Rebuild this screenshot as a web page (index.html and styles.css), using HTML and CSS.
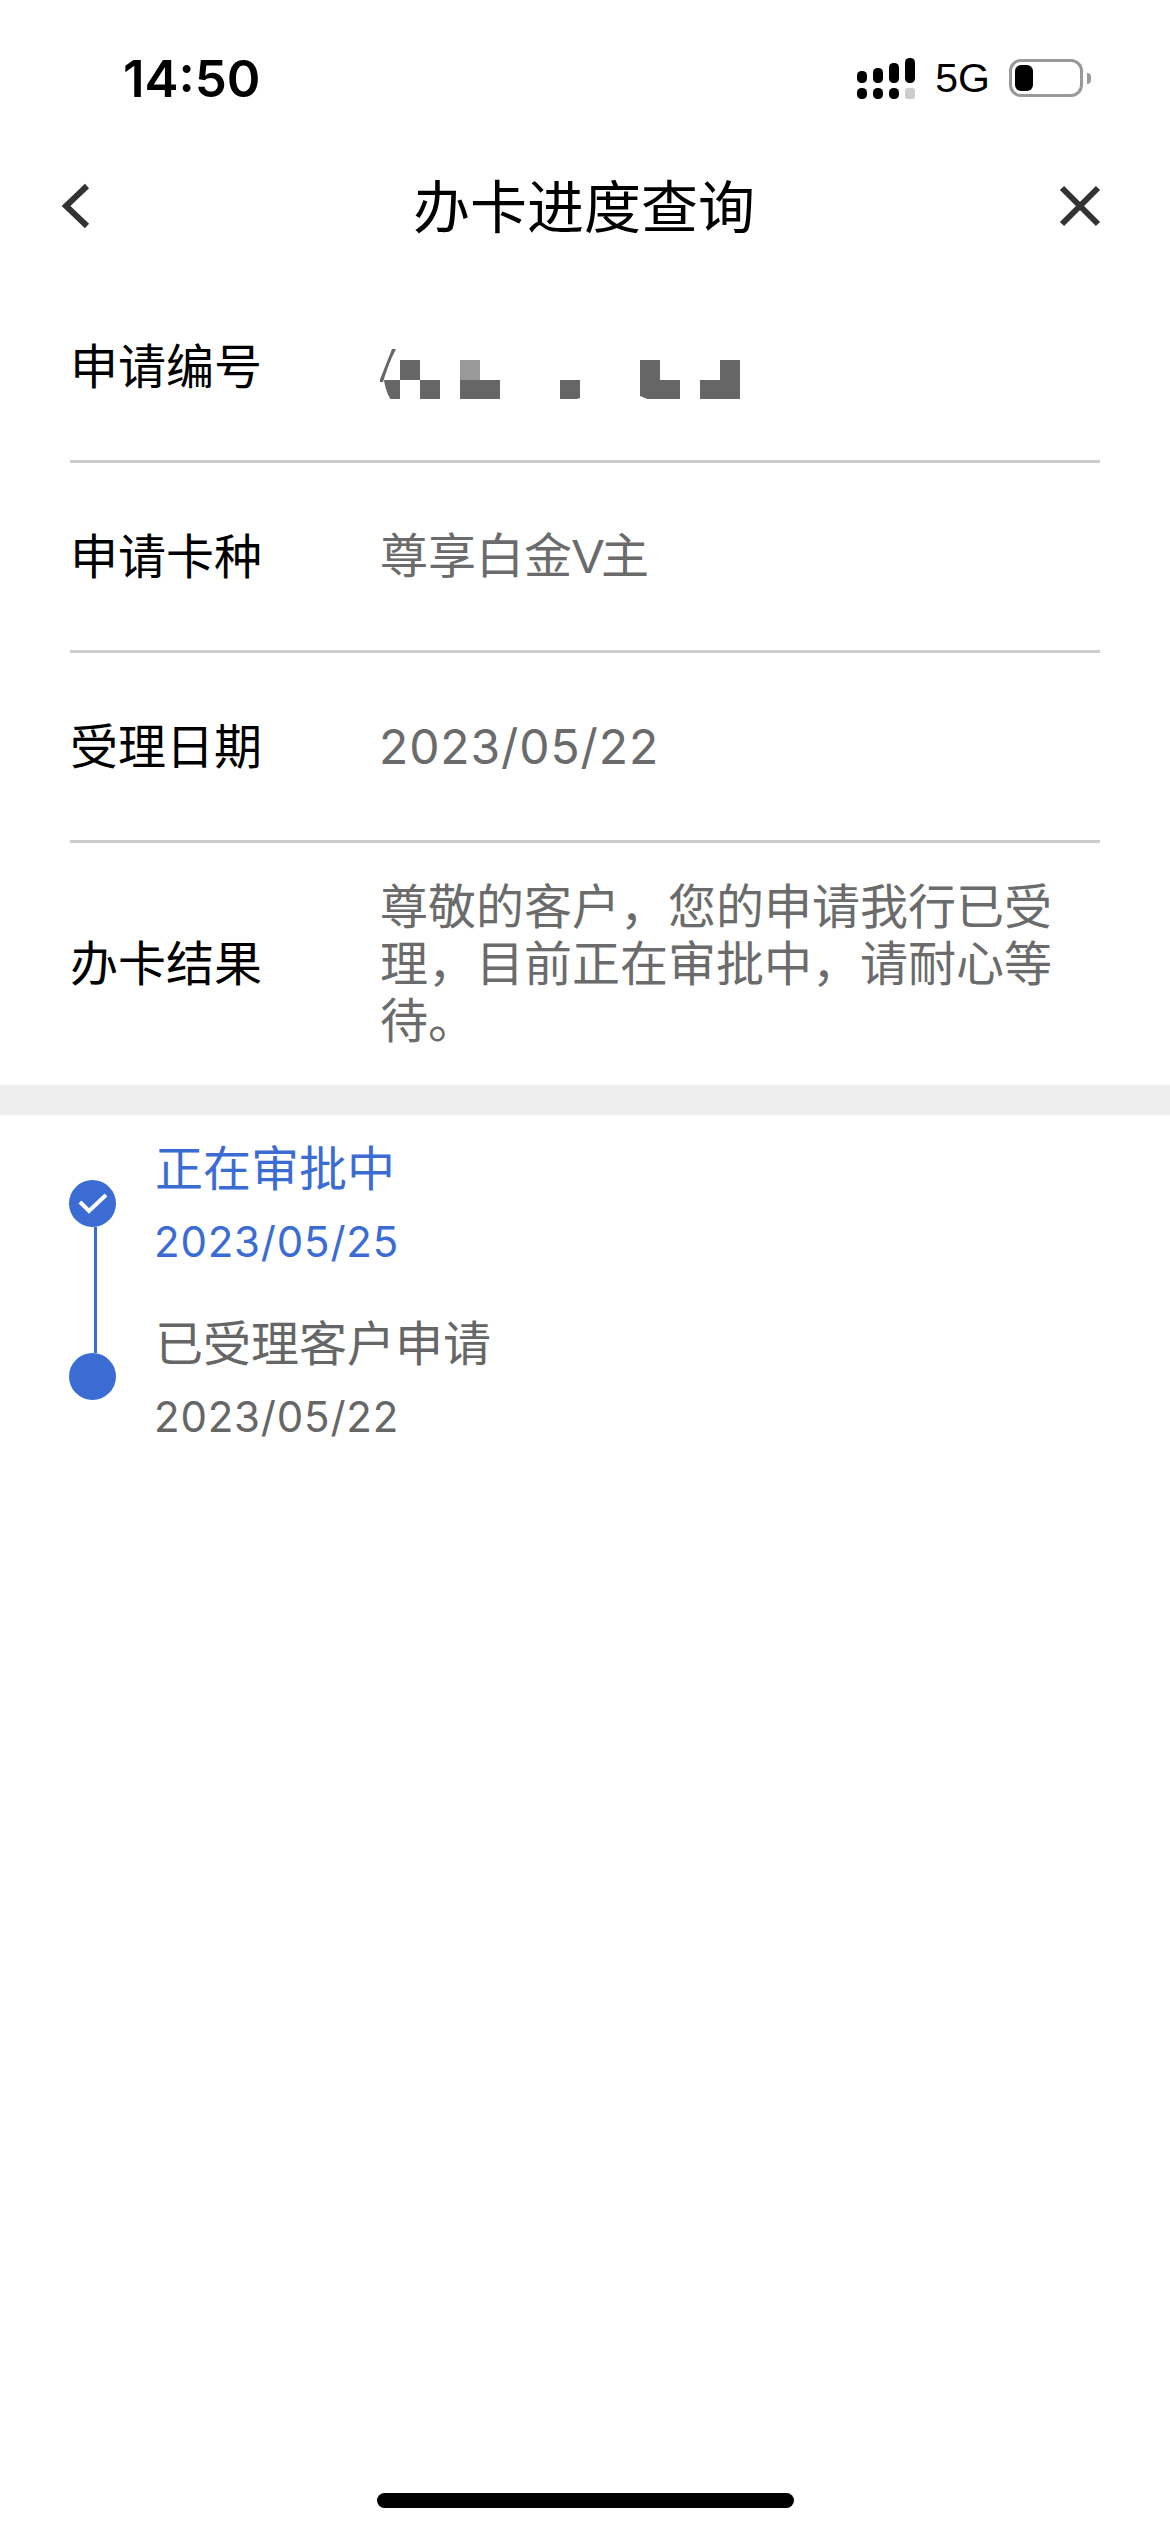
FILE: index.html
```html
<!DOCTYPE html>
<html lang="zh-CN">
  <head>
    <meta charset="UTF-8" />
    <meta name="viewport" content="width=device-width, initial-scale=1.0" />
    <title>办卡进度查询</title>
    <link rel="stylesheet" href="styles.css">
  </head>
  <body>
    <div class="page">

      <div class="status-bar">
        <span class="time">14:50</span>
        <div class="status-icons">
          <svg class="signal" width="58" height="41" viewBox="0 0 58 41">
            <rect x="0" y="13" width="10" height="12" rx="4.5" />
            <rect x="16" y="10" width="10" height="15" rx="4.5" />
            <rect x="32" y="5" width="10" height="20" rx="4.5" />
            <rect x="48" y="0" width="10" height="25" rx="4.5" />
            <rect x="0" y="30" width="10" height="11" rx="4.5" />
            <rect x="16" y="30" width="10" height="11" rx="4.5" />
            <rect x="32" y="30" width="10" height="11" rx="4.5" />
            <rect x="48" y="30" width="10" height="11" rx="3" fill="#ccc" />
          </svg>
          <span class="network">5G</span>
          <div class="battery">
            <div class="battery-level"></div>
          </div>
          <div class="battery-nub"></div>
        </div>
      </div>

      <div class="nav">
        <svg class="nav-icon nav-back" width="34" height="50" viewBox="0 0 34 50">
          <path d="M29 6 L8 26 L29 46" />
        </svg>
        <h1 class="nav-title">办卡进度查询</h1>
        <svg class="nav-icon nav-close" width="42" height="50" viewBox="0 0 42 50">
          <path d="M3 8 L39 44 M39 8 L3 44" />
        </svg>
      </div>

      <ul class="info">
        <li class="info-row">
          <span class="info-label">申请编号</span>
          <svg class="mosaic" width="360" height="65" viewBox="380 334 360 65">
            <path class="mosaic-dark" d="M400 360h20v20h-20z M420 380h20v20h-20z M384 380h16v20h-9c-4-6-6-13-7-20z M460 380h40v20h-40z M560 380h20v18l-6 2h-14z M640 360h20v20h20v20h-30l-10-4z M700 380h20v-20h20v40h-40z" />
            <path class="mosaic-light" d="M460 360h20v20h-20z" />
            <path class="mosaic-dark" d="M379 382 L392 349 L396 349 C390 360 386 372 383 382 z" />
          </svg>
        </li>
        <li class="info-row">
          <span class="info-label">申请卡种</span>
          <span class="info-value">尊享白金<span class="latin">V</span>主</span>
        </li>
        <li class="info-row">
          <span class="info-label">受理日期</span>
          <span class="info-value info-date">2023/05/22</span>
        </li>
        <li class="info-row info-row-last">
          <span class="info-label">办卡结果</span>
          <span class="info-value">尊敬的客户，您的申请我行已受理，目前正在审批中，请耐心等待。</span>
        </li>
      </ul>

      <div class="band"></div>

      <div class="timeline">
        <div class="rail">
          <div class="dot">
            <svg width="47" height="47" viewBox="0 0 47 47">
              <path d="M11 22 L20 31 L37 15" />
            </svg>
          </div>
          <div class="rail-line"></div>
          <div class="dot"></div>
        </div>
        <ul class="steps">
          <li class="step step-current">
            <div class="step-title">正在审批中</div>
            <div class="step-date">2023/05/25</div>
          </li>
          <li class="step">
            <div class="step-title">已受理客户申请</div>
            <div class="step-date">2023/05/22</div>
          </li>
        </ul>
      </div>

      <div class="home-bar"></div>

    </div>
  </body>
</html>
```

FILE: styles.css
```css
body {
  margin: 0;
  background: #fff;
  font-family: "Liberation Sans", "Noto Sans CJK SC", sans-serif;
  color: #000;
}

ul {
  margin: 0;
  padding: 0;
  list-style-type: none;
}

.page {
  position: relative;
  height: 2532px;
  overflow: hidden;
}

.status-bar {
  display: flex;
  justify-content: space-between;
  align-items: center;
  height: 155px;
  padding: 28px 79px 27px 123px;
  box-sizing: border-box;
}
.time {
  font-family: Inter, sans-serif;
  font-size: 51px;
  font-weight: 600;
  color: #000;
}
.status-icons {
  display: flex;
  align-items: center;
}
.signal {
  fill: #000;
}
.network {
  margin: 0 19px 0 20px;
  font-size: 41px;
  color: #000;
}
.battery {
  width: 74px;
  height: 38px;
  padding: 3px;
  box-sizing: border-box;
  border: 3px solid #999;
  border-radius: 12px;
}
.battery-level {
  width: 18px;
  height: 100%;
  background: #000;
  border-radius: 6px;
}
.battery-nub {
  width: 4px;
  height: 11px;
  margin-left: 4px;
  background: #999;
  border-radius: 0 4px 4px 0;
}

.nav {
  display: grid;
  grid-template-columns: 1fr auto 1fr;
  align-items: center;
  height: 100px;
  padding: 0 60px 0 58px;
  margin-bottom: 18px;
}
.nav-title {
  margin: 0 0 4px;
  font-family: "Noto Sans CJK SC", sans-serif;
  font-size: 57px;
  font-weight: 400;
  color: #000;
}
.nav-icon {
  fill: none;
  stroke: #333;
  stroke-width: 6;
}
.nav-close {
  justify-self: end;
  margin-right: 9px;
}

.info {
  padding: 0 70px;
}
.info-row {
  display: flex;
  align-items: center;
  height: 190px;
  box-sizing: border-box;
  border-bottom: 3px solid #ccc;
}
.info-row-last {
  height: 242px;
  border-bottom: none;
}
.info-label {
  flex: none;
  width: 310px;
  padding-bottom: 8px;
  font-family: "Noto Sans CJK SC", sans-serif;
  font-size: 48px;
  color: #000;
}
.info-value {
  width: 690px;
  font-size: 48px;
  line-height: 57px;
  color: #6b6b6b;
}
.info-date {
  margin-left: -1px;
  font-family: Inter, sans-serif;
  letter-spacing: 0.9px;
}
.latin {
  letter-spacing: -3px;
}
.mosaic-dark {
  fill: #666;
}
.mosaic-light {
  fill: #999;
}

.band {
  height: 30px;
  background: #eee;
}

.timeline {
  display: flex;
  padding: 25px 0 0 69px;
}
.rail {
  display: flex;
  flex-direction: column;
  width: 47px;
  margin: 40px 39px 0 0;
}
.dot {
  flex: none;
  width: 47px;
  height: 47px;
  background: #3b6cd4;
  border-radius: 50%;
}
.dot svg {
  display: block;
  fill: none;
  stroke: #fff;
  stroke-width: 4;
}
.rail-line {
  width: 3px;
  height: 126px;
  margin-left: 25px;
  background: #3b6cd4;
}
.step {
  height: 175px;
  color: #666;
}
.step-current {
  color: #3b6cd4;
}
.step-title {
  height: 60px;
  font-size: 48px;
  line-height: 60px;
}
.step-date {
  height: 72px;
  margin-left: -1px;
  font-family: Inter, sans-serif;
  font-size: 42px;
  line-height: 84px;
  letter-spacing: 0.8px;
}

/* sits over the bottom of the page like the real ios indicator */
.home-bar {
  position: absolute;
  left: 377px;
  bottom: 24px;
  width: 417px;
  height: 15px;
  background: #000;
  border-radius: 8px;
}
```
